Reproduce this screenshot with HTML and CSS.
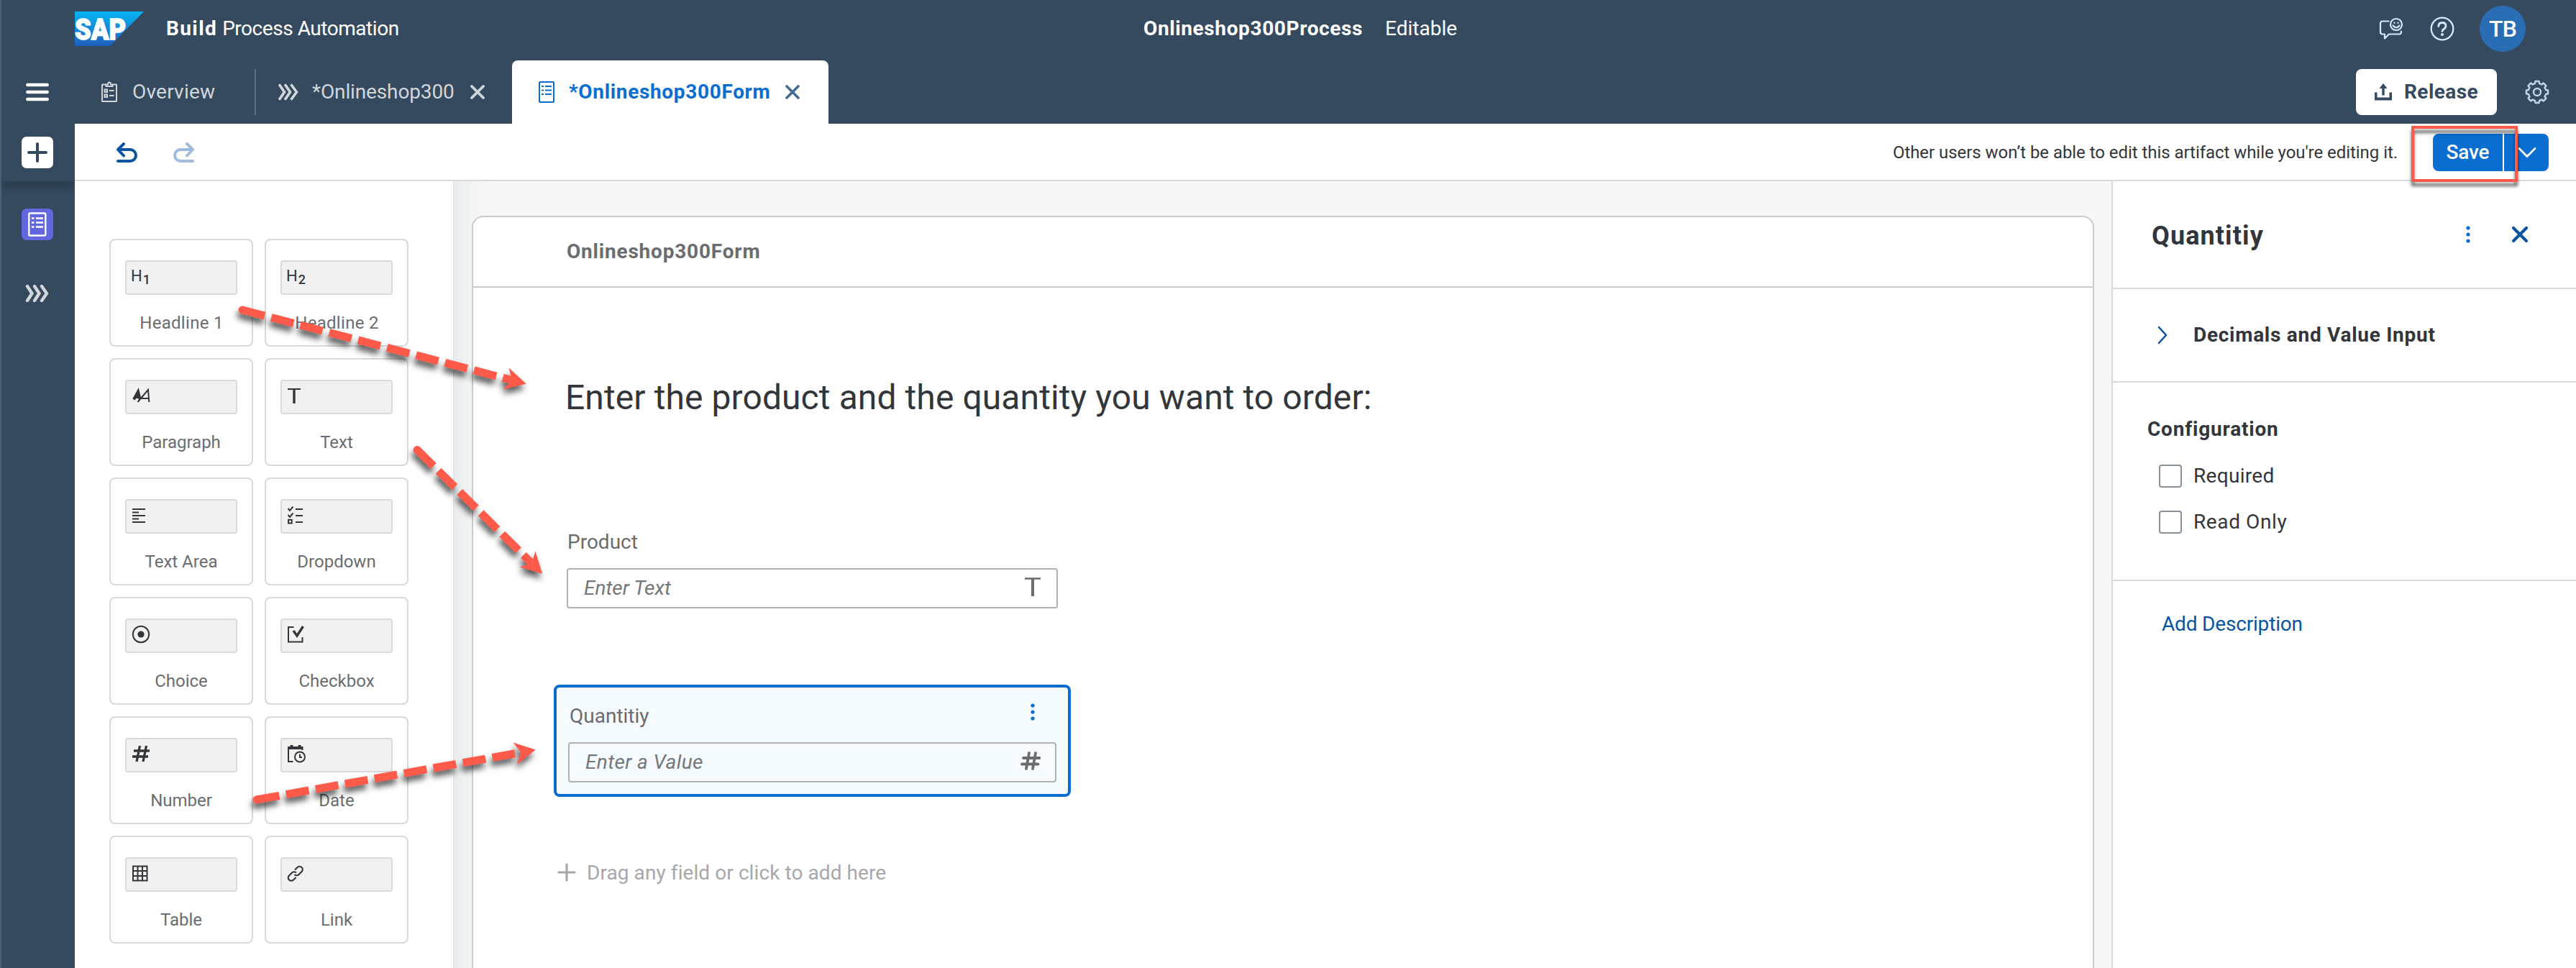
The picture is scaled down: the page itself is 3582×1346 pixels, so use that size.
FILE: index.html
```
<!DOCTYPE html>
<html lang="en">
<head>
<meta charset="utf-8">
<title>SAP Build Process Automation</title>
<link rel="stylesheet" href="styles.css">
</head>
<body>
<header class="shell">
  <div class="brand">
    <svg class="logo" width="96" height="48" viewBox="0 0 96 48">
      <defs><linearGradient id="sap" x1="0" y1="0" x2="0" y2="1"><stop offset="0" stop-color="#06b5f0"/><stop offset="1" stop-color="#1f5fbf"/></linearGradient></defs>
      <path d="M0 0H96L49 48H0z" fill="url(#sap)"/>
      <text class="logo-text" x="0" y="38.500" textLength="71" lengthAdjust="spacingAndGlyphs">SAP</text>
    </svg>
    <span class="product"><b class="product-strong">Build</b><span class="product-light">Process Automation</span></span>
  </div>
  <div class="project"><b class="project-name">Onlineshop300Process</b><span>Editable</span></div>
  <div class="shell-actions">
    <svg class="feedback" width="34" height="34" viewBox="0 0 34 34" fill="none" stroke="#d1e8ff" stroke-width="2.2" stroke-linejoin="round" stroke-linecap="round">
      <path d="M13.500 6.500H5Q2 6.500 2 9.500V21.500Q2 24.500 5 24.500H8V30.500L14 24.500H28.500Q31 24.500 31 20.500"/>
      <circle cx="24" cy="11" r="8"/><path d="M19.500 12.500Q24 18 28.500 12.500"/><path d="M21.500 8.500v.4M26.500 8.500v.4"/>
    </svg>
    <svg class="help" width="34" height="34" viewBox="0 0 34 34" fill="none" stroke="#d1e8ff" stroke-width="2.300" stroke-linecap="round">
      <circle cx="17" cy="17" r="15.300"/><path d="M11.800 13.500Q12 8.500 17 8.500T22 13Q22 15.500 19 17.500Q17 18.800 17 20.500" stroke-width="2.800"/><circle cx="17" cy="25" r="1" stroke-width="2"/>
    </svg>
    <span class="avatar">TB</span>
  </div>
</header>
<div class="app">
  <nav class="rail">
    <div class="rail-top">
      <svg class="menu" width="32" height="26" viewBox="0 0 32 26" stroke="#fff" stroke-width="4.500" stroke-linecap="round"><path d="M2.300 3H29.700M2.300 13H29.700M2.300 23H29.700"/></svg>
      <span class="rail-add"><svg width="28" height="28" viewBox="0 0 28 28" stroke="#354a5f" stroke-width="4" stroke-linecap="round"><path d="M14 2V26M2 14H26"/></svg></span>
    </div>
    <div class="rail-items">
      <span class="rail-form"><svg width="26" height="34" viewBox="0 0 26 34" fill="none" stroke="#fff" stroke-width="2.400"><rect x="1.300" y="1.500" width="23" height="31" rx="1.500"/><path d="M5 8.500H8.500M11 8.500H21M5 14.500H8.500M11 14.500H21M5 20.500H8.500M11 20.500H21" stroke-width="2.600"/></svg></span>
      <svg class="rail-process" width="34" height="26" viewBox="0 0 34 26" fill="none" stroke="#d1d6da" stroke-width="4.400" stroke-linecap="round" stroke-linejoin="round"><path d="M3 3L9.500 13L3 23M13 3L19.500 13L13 23M23 3L30 13L23 23"/></svg>
    </div>
  </nav>
  <div class="content">
    <div class="tabs">
      <div class="tab tab-overview">
        <svg width="24" height="30" viewBox="0 0 24 30" fill="none" stroke="#d1d6da" stroke-width="2"><path d="M7 4.500H2.500Q2 4.500 2 5V27.500Q2 28 2.500 28H21.500Q22 28 22 27.500V5Q22 4.500 21.500 4.500H17"/><path d="M7.500 7V4.500H10Q10 1.500 12 1.500T14 4.500H16.500V7z"/><path d="M5.500 11.500H9V15H5.500zM5.500 18.500H9V22H5.500zM12 13H18.500M12 20H18.500"/></svg>
        <span class="overview-label">Overview</span>
      </div>
      <div class="tab tab-process">
        <svg width="30" height="24" viewBox="0 0 30 24" fill="none" stroke="#d1d6da" stroke-width="3.700" stroke-linecap="round" stroke-linejoin="round"><path d="M3 2.500L9.500 12L3 21.500M11 2.500L17.500 12L11 21.500M19.500 2.500L26.500 12L19.500 21.500"/></svg>
        <span class="process-label">*Onlineshop300</span>
        <svg class="close" width="20" height="20" viewBox="0 0 20 20" stroke="#d1d6da" stroke-width="3.800" stroke-linecap="round"><path d="M2 2L18 18M18 2L2 18"/></svg>
      </div>
      <div class="tab tab-form">
        <svg width="24" height="30" viewBox="0 0 24 30" fill="none" stroke="#0a6ed1" stroke-width="2"><rect x="2" y="1" width="20" height="28" rx="1"/><path d="M5 7H8M10 7H19M5 12.500H8M10 12.500H19M5 18H8M10 18H19" stroke-width="2.200"/></svg>
        <span class="form-label">*Onlineshop300Form</span>
        <svg class="close" width="20" height="20" viewBox="0 0 20 20" stroke="#466b93" stroke-width="3.600" stroke-linecap="round"><path d="M2 2L18 18M18 2L2 18"/></svg>
      </div>
      <button class="release"><svg width="26" height="26" viewBox="0 0 26 26" fill="#354a5f"><path d="M1 13.500H4.500V20.500H21.500V13.500H25V24.500H1z"/><path d="M13 1L18.500 8H14.700V17.500H11.300V8H7.500z"/></svg><span>Release</span></button>
      <svg class="gear" width="34" height="34" viewBox="-17 -17 34 34" fill="none" stroke="#bcd3ea" stroke-width="2.500" stroke-linejoin="round"><path d="M-3 -12L-2.600 -15H2.600L3 -12L6.400 -10.600L8.800 -12.400L12.400 -8.800L10.600 -6.400L12 -3L15 -2.600V2.600L12 3L10.600 6.400L12.400 8.800L8.800 12.400L6.400 10.600L3 12L2.600 15H-2.600L-3 12L-6.400 10.600L-8.800 12.400L-12.400 8.800L-10.600 6.400L-12 3L-15 2.600V-2.600L-12 -3L-10.600 -6.400L-12.400 -8.800L-8.800 -12.400L-6.400 -10.600z"/><circle r="5"/></svg>
    </div>
    <div class="toolbar">
      <svg class="undo" width="30" height="30" viewBox="0 0 30 30" fill="none" stroke="#0854a0" stroke-width="4" stroke-linecap="round" stroke-linejoin="round"><path d="M11 3L3 11L11 19.500M3 11H20A7.500 7.500 0 0 1 20 27H3"/></svg>
      <svg class="redo" width="30" height="30" viewBox="0 0 30 30" fill="none" stroke="#a1bbdc" stroke-width="4" stroke-linecap="round" stroke-linejoin="round"><path d="M19 3L27 11L19 19.500M27 11H10A7.500 7.500 0 0 0 10 27H27"/></svg>
      <span class="notice">Other users won’t be able to edit this artifact while you're editing it.</span>
      <div class="save"><button class="save-main">Save</button><button class="save-more"><svg width="26" height="16" viewBox="0 0 26 16" fill="none" stroke="#fff" stroke-width="2.800" stroke-linecap="round"><path d="M2 2.500L13 13.500L24 2.500"/></svg></button></div>
    </div>
    <div class="workspace">
      <aside class="palette">
        <div class="card"><div class="chip"><span class="glyph">H<sub class="glyph-sub">1</sub></span></div><span class="card-label headline">Headline 1</span></div>
        <div class="card"><div class="chip"><span class="glyph">H<sub class="glyph-sub">2</sub></span></div><span class="card-label headline">Headline 2</span></div>
        <div class="card"><div class="chip"><svg class="ico" viewBox="0 0 40 44"><path d="M2 25.500L8 14.500L10.500 25M4.500 22H10" stroke-width="4"/><path d="M7.500 29L22 12L23.300 29M12.500 24H23" stroke-width="2"/></svg></div><span class="card-label">Paragraph</span></div>
        <div class="card"><div class="chip"><svg class="ico" viewBox="0 0 40 44"><path d="M0 11H18" stroke-width="2"/><path d="M9 11V31" stroke-width="3.400"/></svg></div><span class="card-label">Text</span></div>
        <div class="card"><div class="chip"><svg class="ico" viewBox="0 0 40 44" stroke-width="2"><path d="M0 12H18M0 16.500H9M0 21H18M0 25.500H9M0 30H18"/></svg></div><span class="card-label">Text Area</span></div>
        <div class="card"><div class="chip"><svg class="ico" viewBox="0 0 40 44" stroke-width="2"><path d="M0.500 11L3 14L7.500 8.500M0.500 20L3 23L7.500 17.500M1 26.800H5.700V31.500H1zM11 12H21M11 21H21M11 30H21"/></svg></div><span class="card-label">Dropdown</span></div>
        <div class="card"><div class="chip"><svg class="ico" viewBox="0 0 40 44"><circle cx="12" cy="20" r="11.200" stroke-width="2"/><circle cx="12" cy="20" r="4.600" fill="#32363a" stroke="none"/></svg></div><span class="card-label">Choice</span></div>
        <div class="card"><div class="chip"><svg class="ico" viewBox="0 0 40 44"><path d="M8.500 10H1V30.500H20.500V24" stroke-width="2"/><path d="M8 15L13 22L21.500 9" stroke-width="3.400"/></svg></div><span class="card-label">Checkbox</span></div>
        <div class="card"><div class="chip"><svg class="ico" viewBox="0 0 40 44"><path d="M10.500 9L6 31M19.500 9L15 31M2 16H24M0 24H22" stroke-width="3.300"/></svg></div><span class="card-label">Number</span></div>
        <div class="card"><div class="chip"><svg class="ico" viewBox="0 0 40 44" stroke-width="2"><path d="M7.500 31H1V11H20.500V15"/><path d="M0.500 12H21M5.500 8V12M16.500 8V12" stroke-width="4"/><circle cx="17" cy="24.500" r="7"/><path d="M17 20.500V25H20"/></svg></div><span class="card-label">Date</span></div>
        <div class="card"><div class="chip"><svg class="ico" viewBox="0 0 40 44" stroke-width="2"><path d="M1 10.500H20.500V30.500H1zM7.500 10.500V30.500M14 10.500V30.500M1 17H20.500M1 24H20.500"/></svg></div><span class="card-label">Table</span></div>
        <div class="card"><div class="chip"><svg class="ico" viewBox="0 0 40 44" stroke-width="2.200"><path d="M10 15.500L13.500 12A4.200 4.200 0 0 1 19.500 18L15.500 22A4.200 4.200 0 0 1 9.500 22"/><path d="M11.500 26L8 29.500A4.200 4.200 0 0 1 2 23.500L6 19.500A4.200 4.200 0 0 1 12 19.500"/></svg></div><span class="card-label">Link</span></div>
      </aside>
      <main class="canvas">
        <div class="form">
          <div class="form-header">Onlineshop300Form</div>
          <h1 class="form-title">Enter the product and the quantity you want to order:</h1>
          <div class="field">
            <span class="field-label">Product</span>
            <div class="input"><i class="placeholder">Enter Text</i><svg width="22" height="28" viewBox="0 0 22 28" stroke="#6a6d70"><path d="M0 2.500H22" stroke-width="2.600"/><path d="M11 2V27" stroke-width="4"/></svg></div>
          </div>
          <div class="field selected">
            <div class="field-top"><span class="field-label">Quantitiy</span><svg width="6" height="26" viewBox="0 0 6 26" fill="#0a6ed1"><circle cx="3" cy="4" r="2.600"/><circle cx="3" cy="13" r="2.600"/><circle cx="3" cy="22" r="2.600"/></svg></div>
            <div class="input"><i class="placeholder value">Enter a Value</i><svg width="28" height="26" viewBox="0 0 28 26" stroke="#6a6d70" stroke-width="3.800" stroke-linecap="round"><path d="M12 2L8 24M21 2L17 24M4 9H26.500M2 17.500H24.500"/></svg></div>
          </div>
          <div class="drop"><svg width="26" height="26" viewBox="0 0 26 26" stroke="#a6a8aa" stroke-width="3.200" stroke-linecap="round"><path d="M13 2V24M2 13H24"/></svg><span>Drag any field or click to add here</span></div>
        </div>
      </main>
      <aside class="panel">
        <div class="panel-header">
          <h2 class="panel-title">Quantitiy</h2>
          <svg class="panel-more" width="6" height="26" viewBox="0 0 6 26" fill="#0a6ed1"><circle cx="3" cy="4" r="2.600"/><circle cx="3" cy="13" r="2.600"/><circle cx="3" cy="22" r="2.600"/></svg>
          <svg width="24" height="24" viewBox="0 0 24 24" stroke="#0854a0" stroke-width="4.200" stroke-linecap="round"><path d="M3 3L21 21M21 3L3 21"/></svg>
        </div>
        <div class="panel-group"><svg width="14" height="26" viewBox="0 0 14 26" fill="none" stroke="#0854a0" stroke-width="2.600" stroke-linecap="round" stroke-linejoin="round"><path d="M2 2L12 13L2 24"/></svg><b>Decimals and Value Input</b></div>
        <div class="panel-config">
          <b class="config-title">Configuration</b>
          <label class="check"><span class="box"></span><span class="required">Required</span></label>
          <label class="check"><span class="box"></span><span class="readonly">Read Only</span></label>
        </div>
        <a class="add">Add Description</a>
      </aside>
    </div>
  </div>
</div>
<div class="mark"></div>
<svg class="arrows" width="3582" height="1346" viewBox="0 0 3582 1346">
  <g fill="#ff5a4a" stroke="none">
    <g transform="translate(337 431) rotate(14.600)"><circle r="5.500"/><path class="shaft" d="M0 0H387"/><path d="M408 0L379 -15.500L387 0L379 15.500z"/></g>
    <g transform="translate(580 625.500) rotate(44.700)"><circle r="5.500"/><path class="shaft" d="M0 0H224"/><path d="M245 0L216 -15.500L224 0L216 15.500z"/></g>
    <g transform="translate(357 1112) rotate(-10.150)"><circle r="5.500"/><path class="shaft" d="M0 0H373"/><path d="M394 0L365 -15.500L373 0L365 15.500z"/></g>
  </g>
</svg>
</body>
</html>
```
FILE: styles.css
```
* { box-sizing: border-box; }
body { margin: 0; width: 3582px; height: 1346px; overflow: hidden; position: relative; display: flex; flex-direction: column; background: #354a5f; color: #32363a; font-family: Roboto, sans-serif; font-size: 28px; line-height: 40px; }
svg { display: block; flex: none; }
button { border: 0; padding: 0; font: inherit; }

.shell { height: 80px; flex: none; display: flex; align-items: center; padding: 0 70px 0 102px; border-left: 2px solid #4d6073; color: #fff; }
.brand { width: 1486px; display: flex; align-items: center; gap: 31px; }
.logo-text { font: 900 41px/1 Roboto, sans-serif; fill: #fff; stroke: #fff; stroke-width: 1.5px; }
.product { display: flex; gap: 7px; line-height: 38px; margin-top: -1px; }
.product-strong { letter-spacing: 1.4px; }
.product-light { letter-spacing: -0.46px; }
.project { display: flex; gap: 31px; margin-top: -1px; }
.project-name { letter-spacing: 0.62px; }
.shell-actions { margin-left: auto; display: flex; align-items: center; }
.feedback { margin-right: 37px; }
.help { margin-right: 35px; }
.avatar { width: 64px; height: 64px; border-radius: 50%; background: #296eb5; display: flex; align-items: center; justify-content: center; font-size: 32px; font-weight: 500; letter-spacing: -0.8px; }

.app { flex: 1; display: flex; min-height: 0; }
.rail { width: 104px; flex: none; border-left: 2px solid #4d6073; display: flex; flex-direction: column; }
.rail-top { height: 172px; display: flex; flex-direction: column; align-items: center; padding: 35px 2px 0 0; box-shadow: 0 6px 16px rgba(0, 0, 0, .25); clip-path: inset(0 0 -40px 0); }
.rail-add { margin-top: 49px; width: 44px; height: 44px; border-radius: 7px; background: #fff; display: flex; align-items: center; justify-content: center; }
.rail-items { display: flex; flex-direction: column; align-items: center; padding: 38px 2px 0 0; }
.rail-form { width: 44px; height: 44px; border-radius: 7px; background: #6367de; display: flex; align-items: center; justify-content: center; }
.rail-process { margin-top: 61px; }

.content { flex: 1; display: flex; flex-direction: column; min-width: 0; }
.tabs { height: 92px; flex: none; display: flex; align-items: center; padding: 4px 37px 0 0; color: #d1d6da; }
.tab { height: 64px; display: flex; align-items: center; }
.tab > span { margin-top: -1px; }
.tab-overview { width: 252px; padding-left: 36px; gap: 20px; border-right: 2px solid #5d6f80; }
.overview-label { letter-spacing: 0.22px; }
.tab-process { width: 356px; padding-left: 30px; gap: 18px; }
.process-label { letter-spacing: -0.13px; }
.tab-process .close { margin-left: 4px; }
.tab-form { width: 440px; height: 88px; padding-left: 36px; gap: 19px; background: #fff; border-radius: 8px 8px 0 0; color: #0a6ed1; }
.form-label { font-weight: 700; letter-spacing: 0.66px; }
.tab-form .close { margin-left: 2px; }
.release { margin-left: auto; width: 196px; height: 64px; border-radius: 8px; background: #fff; color: #354a5f; font-weight: 700; letter-spacing: 0.42px; display: flex; align-items: center; padding-left: 25px; gap: 16px; }
.gear { margin-left: 39px; }

.toolbar { height: 80px; flex: none; display: flex; align-items: flex-start; padding: 0 38px 0 57px; background: #fff; border-bottom: 2px solid #d9d9d9; }
.undo { margin-top: 25px; }
.redo { margin: 25px 0 0 50px; }
.notice { margin-left: auto; font-size: 24px; line-height: 80px; letter-spacing: -0.05px; }
.save { margin: 14px 0 0 49px; height: 52px; display: flex; gap: 2px; }
.save button { height: 52px; background: #0a6ed1; color: #fff; }
.save-main { width: 97px; border-radius: 8px 0 0 8px; font-weight: 500; letter-spacing: -0.18px; }
.save .save-main { line-height: 51px; padding-bottom: 1px; }
.save-more { width: 62px; border-radius: 0 8px 8px 0; padding-left: 19px; }

.workspace { flex: 1; display: flex; min-height: 0; background: #fff; }
.palette { width: 527px; flex: none; padding: 80px 0 0 48px; display: grid; grid-template-columns: 200px 200px; grid-auto-rows: 150px; gap: 16px; background: #fff; border-right: 1px solid #dfe1e3; }
.card { border: 2px solid #d9d9d9; border-radius: 8px; padding: 28px 20px 0; display: flex; flex-direction: column; align-items: center; gap: 21px; }
.chip { width: 156px; height: 48px; border: 2px solid #d9d9d9; border-radius: 4px; background: #f1f1f1; padding-left: 8px; overflow: hidden; }
.glyph { display: flex; align-items: baseline; gap: 1px; margin-left: -2px; font-size: 22px; line-height: 40px; }
.glyph-sub { font-size: 18px; font-weight: 500; vertical-align: baseline; line-height: 30px; transform: translateY(4px); }
.ico { width: 40px; height: 44px; fill: none; stroke: #32363a; overflow: visible; }
.card-label { font-size: 24px; line-height: 36px; color: #6a6d70; }
.headline { letter-spacing: 0.3px; padding-left: 1px; }

.canvas { flex: 1; min-width: 0; padding: 48px 24px 0 25px; background: linear-gradient(90deg, #e9ecef 0, #f3f4f4 26px, #f7f7f7 50px); display: flex; }
.form { flex: 1; border: 2px solid #cacaca; border-bottom: 0; border-radius: 16px 16px 0 0; background: #fff; }
.form-header { height: 98px; padding-left: 130px; line-height: 95px; border-bottom: 2px solid #cacaca; font-weight: 700; letter-spacing: 0.8px; color: #6a6d70; }
.form-title { margin: 123px 0 0 128px; font-size: 48px; font-weight: 400; line-height: 60px; letter-spacing: 0.09px; }
.field { margin: 151px 0 0 130px; width: 683px; color: #6a6d70; }
.field-label { display: block; padding-left: 1px; }
.input { margin-top: 16px; height: 56px; padding: 0 22px; border: 2px solid #b0b1b2; border-radius: 4px; display: flex; align-items: center; justify-content: space-between; line-height: 50px; }
.placeholder { color: #74777a; margin-top: -1px; }
.input svg { margin-top: -4px; }
.value { letter-spacing: 0.38px; }
.selected { width: 719px; height: 156px; margin: 106px 0 0 112px; padding: 20px 16px 0; border: 4px solid #0a6ed1; border-radius: 8px; background: #f5faff; }
.field-top { display: flex; justify-content: space-between; padding-right: 30px; }
.field-top svg { margin-top: 1px; }
.selected .field-label { padding-left: 2px; }
.selected .input { padding-right: 20px; }
.drop { margin: 86px 0 0 117px; display: flex; align-items: center; gap: 15px; color: #a6a8aa; letter-spacing: 0.08px; }
.drop svg { margin-top: -2px; }

.panel { width: 646px; flex: none; border-left: 2px solid #d9d9d9; }
.panel-header { height: 150px; padding: 0 66px 0 54px; display: flex; align-items: center; border-bottom: 2px solid #d9d9d9; }
.panel-title { margin: 3px auto 0 0; font-size: 36px; font-weight: 700; letter-spacing: 1.1px; }
.panel-more { margin-right: 57px; }
.panel-group { height: 130px; padding-left: 62px; display: flex; align-items: center; gap: 36px; border-bottom: 2px solid #d9d9d9; letter-spacing: 0.72px; }
.panel-group b { margin-top: -1px; }
.panel-config { height: 276px; padding: 45px 0 0 48px; border-bottom: 2px solid #d9d9d9; }
.config-title { display: block; margin-bottom: 29px; letter-spacing: 0.8px; }
.check { display: flex; align-items: center; gap: 16px; height: 32px; margin: 0 0 32px 16px; }
.box { width: 32px; height: 32px; border: 2px solid #89919a; border-radius: 4px; }
.required { letter-spacing: 0.3px; }
.readonly { letter-spacing: 0.6px; }
.add { display: block; margin: 40px 0 0 68px; color: #0854a0; letter-spacing: -0.18px; }

.mark { position: absolute; left: 3353px; top: 175px; width: 148px; height: 78px; border: 4px solid #ff5a4a; filter: drop-shadow(0 6px 2px rgba(0, 0, 0, .6)); }
.arrows { position: absolute; left: 0; top: 0; filter: drop-shadow(-2px 7px 4px rgba(0, 0, 0, .65)); pointer-events: none; }
.shaft { stroke: #ff5a4a; stroke-width: 11px; stroke-dasharray: 32 9.6; }
```
